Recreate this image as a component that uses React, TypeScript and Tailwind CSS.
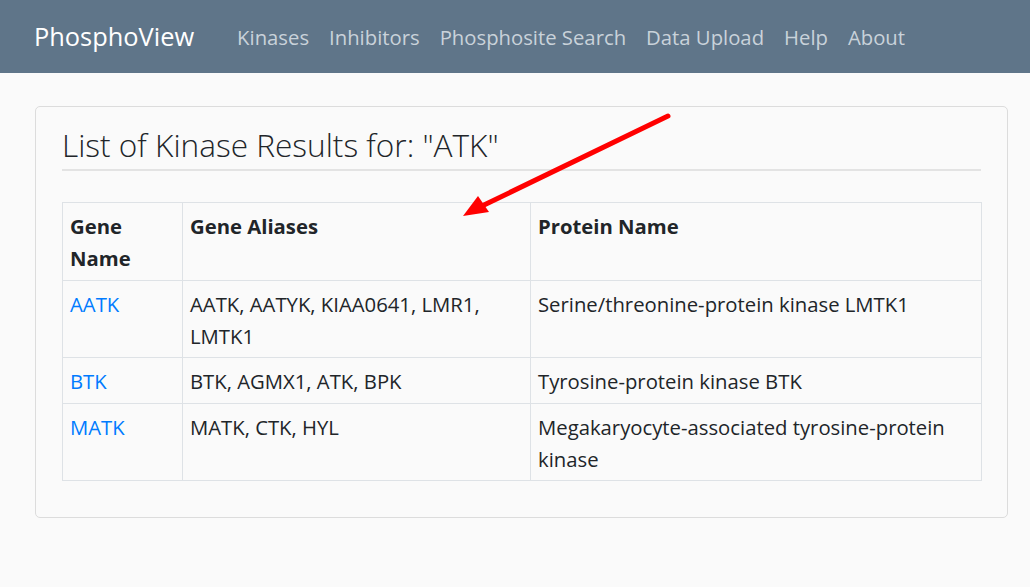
import React from "react";

interface KinaseRow {
  gene: string;
  aliases: string;
  protein: string;
}

const rows: KinaseRow[] = [
  {
    gene: "AATK",
    aliases: "AATK, AATYK, KIAA0641, LMR1, LMTK1",
    protein: "Serine/threonine-protein kinase LMTK1",
  },
  { gene: "BTK", aliases: "BTK, AGMX1, ATK, BPK", protein: "Tyrosine-protein kinase BTK" },
  {
    gene: "MATK",
    aliases: "MATK, CTK, HYL",
    protein: "Megakaryocyte-associated tyrosine-protein kinase",
  },
];

const navLinks = ["Kinases", "Inhibitors", "Phosphosite Search", "Data Upload", "Help", "About"];

export default function App() {
  return (
    <div
      className="relative min-h-[587px] bg-[#fafafa] text-[#212529]"
      style={{ fontFamily: '"Open Sans", "Noto Sans", Arial, sans-serif' }}
    >
      <nav className="flex items-center h-[73px] bg-[#5f7589] pl-[34px]">
        <span className="text-[25.4px] text-white mr-[33px] leading-none">PhosphoView</span>
        <ul className="flex items-center pt-[2px]">
          {navLinks.map((l) => (
            <li key={l} className="px-[10px] text-[20.3px] text-[#c9d2da]">
              {l}
            </li>
          ))}
        </ul>
      </nav>

      <main className="pt-[33px] px-[35px]">
        <div className="w-[973px] h-[412px] border border-[#dcdcdc] rounded-[5px] pt-[19px] px-[26px] pb-[36px]">
          <h3 className="text-[31.6px] font-light leading-[1.2] pb-[5px] border-b-2 border-[#e3e3e3] text-[#212529]">
            List of Kinase Results for: "ATK"
          </h3>

          <table className="mt-[31px] w-[920px] border-collapse text-[20.3px] leading-[32px]">
            <thead>
              <tr>
                <th className="w-[120px] border border-[#dee2e6] px-[7px] pt-[7.5px] pb-[5.5px] text-left align-top font-bold">
                  Gene Name
                </th>
                <th className="w-[348px] border border-[#dee2e6] px-[7px] pt-[7.5px] pb-[5.5px] text-left align-top font-bold">
                  Gene Aliases
                </th>
                <th className="border border-[#dee2e6] px-[7px] pt-[7.5px] pb-[5.5px] text-left align-top font-bold">
                  Protein Name
                </th>
              </tr>
            </thead>
            <tbody>
              {rows.map((r) => (
                <tr key={r.gene}>
                  <td className="border border-[#dee2e6] px-[7px] pt-[7px] pb-[5.5px] align-top">
                    <a className="text-[#007bff]">{r.gene}</a>
                  </td>
                  <td className="border border-[#dee2e6] px-[7px] pt-[7px] pb-[5.5px] align-top">{r.aliases}</td>
                  <td className="border border-[#dee2e6] px-[7px] pt-[7px] pb-[5.5px] align-top">{r.protein}</td>
                </tr>
              ))}
            </tbody>
          </table>
        </div>
      </main>

      {/* annotation arrow */}
      <svg className="absolute left-0 top-0 pointer-events-none" width="1030" height="587">
        <line x1="668" y1="116" x2="484" y2="205" stroke="#ff0000" strokeWidth="5" strokeLinecap="round" />
        <polygon points="463,216 478,196 489,212" fill="#ff0000" />
      </svg>
    </div>
  );
}
